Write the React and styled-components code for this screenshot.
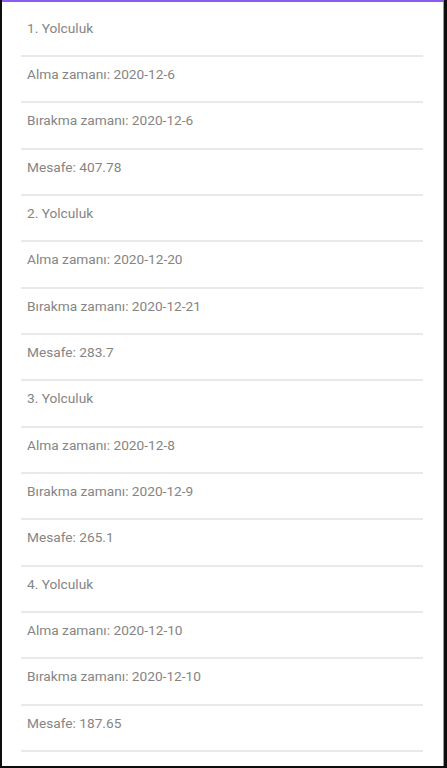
import React from "react";
import styled, { createGlobalStyle } from "styled-components";

const GlobalStyle = createGlobalStyle`
  html, body {
    margin: 0;
    padding: 0;
    background: #ffffff;
  }
  body {
    font-family: Roboto, "Noto Sans", sans-serif;
  }
`;

const trips = [
  { pickup: "2020-12-6", dropoff: "2020-12-6", distance: "407.78" },
  { pickup: "2020-12-20", dropoff: "2020-12-21", distance: "283.7" },
  { pickup: "2020-12-8", dropoff: "2020-12-9", distance: "265.1" },
  { pickup: "2020-12-10", dropoff: "2020-12-10", distance: "187.65" },
];

export default function App() {
  const rows = [];
  trips.forEach((t, i) => {
    rows.push(`${i + 1}. Yolculuk`);
    rows.push(`Alma zamanı: ${t.pickup}`);
    rows.push(`Bırakma zamanı: ${t.dropoff}`);
    rows.push(`Mesafe: ${t.distance}`);
  });

  return (
    <Frame>
      <GlobalStyle />
      <TopBar />
      <List>
        {rows.map((text, i) => (
          <Row key={i}>
            <Label>{text}</Label>
          </Row>
        ))}
      </List>
    </Frame>
  );
}

const Frame = styled.div`
  box-sizing: border-box;
  width: 447px;
  height: 768px;
  display: flex;
  flex-direction: column;
  border-left: 2px solid #0d0d0d;
  border-right: 3px solid #0d0d0d;
  border-bottom: 2px solid #0d0d0d;
  background: #ffffff;
  overflow: hidden;
`;

const TopBar = styled.div`
  height: 2px;
  flex-shrink: 0;
  background: #8a5cf2;
`;

const List = styled.div`
  display: flex;
  flex-direction: column;
  padding: 8.67px 21px 0 19px;
  box-shadow: inset -1px 0 0 #9a9a9a;
  flex: 1;
`;

const Row = styled.div`
  box-sizing: border-box;
  height: 46.33px;
  padding: 9px 0 0 6px;
  border-bottom: 2px solid #e9e9e9;
`;

const Label = styled.div`
  font-size: 13.7px;
  line-height: 16px;
  color: #858585;
  white-space: nowrap;
`;
